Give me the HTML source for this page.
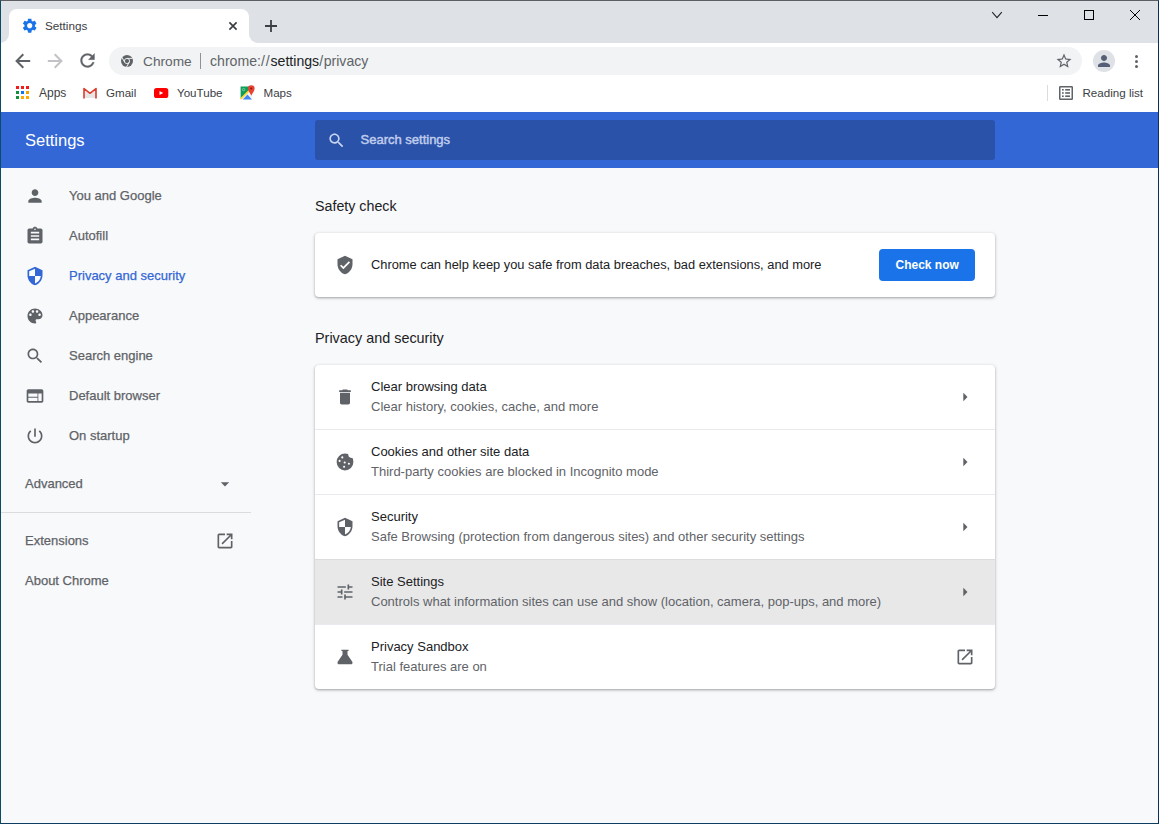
<!DOCTYPE html>
<html><head><meta charset="utf-8">
<style>
*{box-sizing:border-box;margin:0;padding:0}
html,body{width:1159px;height:824px;overflow:hidden;background:#f8f9fa;font-family:"Liberation Sans",sans-serif}
.a{position:absolute}
.t{position:absolute;white-space:nowrap;line-height:1}
svg{position:absolute;display:block}
#frame{position:absolute;left:0;top:0;width:1159px;height:824px;border:1px solid #0d4a66;border-top-color:#5c5e61;border-right-color:#0c2f5c;border-bottom-color:#0d3d60;pointer-events:none}
#tabstrip{left:0;top:0;width:1159px;height:43px;background:#dee1e6}
#toolbar{left:0;top:43px;width:1159px;height:69px;background:#fff}
#omni{left:109px;top:47px;width:973px;height:28px;border-radius:14px;background:#f1f3f4}
#header{left:0;top:112px;width:1159px;height:56px;background:#3367d6}
#search{left:315px;top:120px;width:680px;height:40px;border-radius:3px;background:#2a52a9}
.side{color:#5f6368;font-size:13px;-webkit-text-stroke:0.25px #5f6368}
.card{background:#fff;border-radius:4px;box-shadow:0 1px 2px rgba(60,64,67,.3),0 1px 3px 1px rgba(60,64,67,.15)}
.prim{color:#202124;font-size:13px}
.sec{color:#5f6368;font-size:13px}
.ic{fill:#5f6368}
</style></head><body>
<!-- tab strip -->
<div id="tabstrip" class="a"></div>
<!-- active tab -->
<div class="a" style="left:9px;top:9px;width:240px;height:34px;background:#fff;border-radius:8px 8px 0 0"></div>
<div class="a" style="left:0px;top:34px;width:9px;height:9px;background:#fff"></div>
<div class="a" style="left:0px;top:25px;width:9px;height:18px;background:#dee1e6;border-radius:0 0 9px 0"></div>
<div class="a" style="left:249px;top:34px;width:9px;height:9px;background:#fff"></div>
<div class="a" style="left:249px;top:25px;width:9px;height:18px;background:#dee1e6;border-radius:0 0 0 9px"></div>
<!-- gear -->
<svg style="left:20.6px;top:17.1px" width="17.4" height="17.4" viewBox="0 0 24 24"><path fill="#1a73e8" d="M19.14 12.94c.04-.3.06-.61.06-.94 0-.32-.02-.64-.07-.94l2.03-1.58a.49.49 0 0 0 .12-.61l-1.92-3.32a.488.488 0 0 0-.59-.22l-2.39.96c-.5-.38-1.03-.7-1.62-.94l-.36-2.54a.484.484 0 0 0-.48-.41h-3.84c-.24 0-.43.17-.47.41l-.36 2.54c-.59.24-1.13.57-1.62.94l-2.39-.96c-.22-.08-.47 0-.59.22L2.74 8.87c-.12.21-.08.47.12.61l2.03 1.58c-.05.3-.09.63-.09.94s.02.64.07.94l-2.03 1.58a.49.49 0 0 0-.12.61l1.92 3.32c.12.22.37.29.59.22l2.39-.96c.5.38 1.03.7 1.62.94l.36 2.54c.05.24.24.41.48.41h3.84c.24 0 .44-.17.47-.41l.36-2.54c.59-.24 1.13-.56 1.62-.94l2.39.96c.22.08.47 0 .59-.22l1.92-3.32c.12-.22.07-.47-.12-.61l-2.01-1.58zM12 15.6c-1.98 0-3.6-1.62-3.6-3.6s1.62-3.6 3.6-3.6 3.6 1.62 3.6 3.6-1.62 3.6-3.6 3.6z"/></svg>
<div class="t" style="left:45px;top:19.5px;font-size:11.7px;color:#3c4043">Settings</div>
<!-- tab close -->
<svg style="left:227px;top:20px" width="12" height="12" viewBox="0 0 12 12"><path d="M2.4 2.4L9.6 9.6M9.6 2.4L2.4 9.6" stroke="#3c4043" stroke-width="1.7"/></svg>
<!-- new tab plus -->
<svg style="left:264px;top:18.8px" width="14" height="14" viewBox="0 0 14 14"><path d="M7 1V13M1 7H13" stroke="#3c4043" stroke-width="1.8"/></svg>
<!-- window controls -->
<svg style="left:990px;top:9px" width="14" height="12" viewBox="0 0 14 12"><path d="M2.2 3.1L7 8.6L11.8 3.1" fill="none" stroke="#202124" stroke-width="1.05"/></svg>
<div class="a" style="left:1038px;top:15px;width:10px;height:1px;background:#000"></div>
<div class="a" style="left:1084px;top:10px;width:10px;height:10px;border:1px solid #000"></div>
<svg style="left:1129px;top:9px" width="12" height="12" viewBox="0 0 12 12"><path d="M1 1L11 11M11 1L1 11" stroke="#000" stroke-width="1"/></svg>

<!-- toolbar -->
<div id="toolbar" class="a"></div>
<svg style="left:14px;top:52px" width="18" height="18" viewBox="0 0 18 18"><path d="M2.6 9H16.2M9.3 2.3L2.6 9L9.3 15.7" fill="none" stroke="#5f6368" stroke-width="2"/></svg>
<svg style="left:46px;top:52px" width="18" height="18" viewBox="0 0 18 18"><path d="M15.4 9H1.8M8.7 2.3L15.4 9L8.7 15.7" fill="none" stroke="#c1c3c6" stroke-width="2"/></svg>
<svg style="left:76.5px;top:50.3px" width="21" height="21" viewBox="0 0 24 24"><path fill="#5f6368" stroke="#5f6368" stroke-width="0.35" d="M17.65 6.35C16.2 4.9 14.21 4 12 4c-4.42 0-7.99 3.58-7.99 8s3.57 8 7.99 8c3.73 0 6.84-2.55 7.73-6h-2.08c-.82 2.33-3.04 4-5.65 4-3.31 0-6-2.69-6-6s2.69-6 6-6c1.66 0 3.14.69 4.22 1.78L13 11h7V4l-2.35 2.35z"/></svg>
<div id="omni" class="a"></div>
<!-- chrome logo -->
<svg style="left:121px;top:55px" width="12" height="12" viewBox="0 0 24 24"><circle cx="12" cy="12" r="12" fill="#5f6368"/><circle cx="12" cy="12" r="5.2" fill="none" stroke="#f1f3f4" stroke-width="1.8"/><g stroke="#f1f3f4" stroke-width="1.8"><path d="M12 6.8H23"/><path d="M12 6.8H23" transform="rotate(120 12 12)"/><path d="M12 6.8H23" transform="rotate(240 12 12)"/></g></svg>
<div class="t" style="left:143px;top:54.8px;font-size:13.7px;color:#5f6368">Chrome</div>
<div class="a" style="left:200px;top:53px;width:1px;height:16px;background:#8e9296"></div>
<div class="t" style="left:210px;top:54.3px;font-size:14.1px;color:#5f6368">chrome:<span style="letter-spacing:0.9px">//</span><span style="color:#202124">settings</span><span style="letter-spacing:0.6px">/</span>privacy</div>
<!-- star -->
<svg style="left:1055px;top:52px" width="18" height="18" viewBox="0 0 24 24"><path fill="#5f6368" d="M22 9.24l-7.19-.62L12 2 9.19 8.63 2 9.24l5.46 4.73L5.82 21 12 17.27 18.18 21l-1.63-7.03L22 9.24zM12 15.4l-3.76 2.27 1-4.28-3.32-2.88 4.38-.38L12 6.1l1.71 4.04 4.38.38-3.32 2.88 1 4.28L12 15.4z"/></svg>
<!-- profile -->
<div class="a" style="left:1093px;top:50px;width:22px;height:22px;border-radius:11px;background:#dee1e6"></div>
<svg style="left:1095px;top:52px" width="18" height="18" viewBox="0 0 24 24"><path fill="#546076" d="M12 12c2.21 0 4-1.79 4-4s-1.79-4-4-4-4 1.79-4 4 1.79 4 4 4zm0 2c-2.67 0-8 1.34-8 4v2h16v-2c0-2.66-5.33-4-8-4z"/></svg>
<!-- menu dots -->
<div class="a" style="left:1135px;top:55px;width:3px;height:3px;border-radius:2px;background:#5f6368"></div>
<div class="a" style="left:1135px;top:60px;width:3px;height:3px;border-radius:2px;background:#5f6368"></div>
<div class="a" style="left:1135px;top:65px;width:3px;height:3px;border-radius:2px;background:#5f6368"></div>

<!-- bookmarks -->
<svg style="left:16px;top:86px" width="14" height="14" viewBox="0 0 14 14">
<rect x="0" y="0" width="3" height="3" fill="#f21c1c"/><rect x="5" y="0" width="3" height="3" fill="#f21c1c"/><rect x="10" y="0" width="3" height="3" fill="#f21c1c"/>
<rect x="0" y="5" width="3" height="3" fill="#168f3c"/><rect x="5" y="5" width="3" height="3" fill="#0f75f2"/><rect x="10" y="5" width="3" height="3" fill="#eea200"/>
<rect x="0" y="10" width="3" height="3" fill="#168f3c"/><rect x="5" y="10" width="3" height="3" fill="#fbab00"/><rect x="10" y="10" width="3" height="3" fill="#fbab00"/></svg>
<div class="t" style="left:39px;top:87px;font-size:12px;color:#3c4043">Apps</div>
<svg style="left:82px;top:87px" width="16" height="12" viewBox="0 0 16 12"><path d="M2 3.5L8 7.5L14 3.5V11H2z" fill="#e6e6e6"/><path d="M2 11V1.6L8 6.3L14 1.6V11" fill="none" stroke="#dd3b2c" stroke-width="1.6" stroke-linejoin="round" stroke-linecap="round"/></svg>
<div class="t" style="left:106px;top:87.2px;font-size:11.6px;color:#3c4043">Gmail</div>
<svg style="left:153.8px;top:87.8px" width="15" height="11" viewBox="0 0 15 11"><rect x="0" y="0" width="14.3" height="10" rx="2.6" fill="#f00"/><path d="M5.5 3.1V7L9.2 5.05z" fill="#fff"/></svg>
<div class="t" style="left:177px;top:87.2px;font-size:11.6px;color:#3c4043">YouTube</div>
<svg style="left:236px;top:82px" width="24" height="20" viewBox="0 0 24 20"><path d="M4.6 4.6H13V8.5L4.6 16.8z" fill="#0f9d58"/><path d="M4.6 17.5L13.5 8.6L16.2 11.3V17.5z" fill="#f4f4f4"/><path d="M6.8 17.5L11.5 12.4L15.9 17.5z" fill="#4285f4"/><path d="M4.6 17.2L13.3 8.5" stroke="#fdd835" stroke-width="1.7"/><circle cx="7.6" cy="7.6" r="1.2" fill="none" stroke="#8fd3a8" stroke-width="0.8"/><path d="M15.3 13.8C14.5 11.5 12 9.5 12 6.6A3.3 3.3 0 0 1 18.6 6.6C18.6 9.5 16.1 11.5 15.3 13.8z" fill="#e94235"/><circle cx="15.3" cy="6.5" r="1.1" fill="#8a1c12"/></svg>
<div class="t" style="left:263.5px;top:87.2px;font-size:11.6px;color:#3c4043">Maps</div>
<div class="a" style="left:1047px;top:85px;width:1px;height:16px;background:#dadce0"></div>
<svg style="left:1059px;top:86px" width="14" height="14" viewBox="0 0 14 14"><rect x="0.75" y="0.75" width="12.5" height="12.5" rx="0.6" fill="none" stroke="#5f6368" stroke-width="1.5"/><rect x="3" y="3" width="1.7" height="1.6" fill="#5f6368"/><rect x="6.2" y="3" width="4.8" height="1.6" fill="#5f6368"/><rect x="3" y="6.2" width="1.7" height="1.6" fill="#5f6368"/><rect x="6.2" y="6.2" width="4.8" height="1.6" fill="#5f6368"/><rect x="3" y="9.4" width="1.7" height="1.6" fill="#5f6368"/><rect x="6.2" y="9.4" width="4.8" height="1.6" fill="#5f6368"/></svg>
<div class="t" style="left:1082.5px;top:87.2px;font-size:11.6px;color:#3c4043">Reading list</div>

<!-- settings header -->
<div id="header" class="a"></div>
<div class="t" style="left:25px;top:132px;font-size:16.5px;color:#fff">Settings</div>
<div id="search" class="a"></div>
<svg style="left:327px;top:130.5px" width="19" height="19" viewBox="0 0 24 24"><path fill="#c8d5f3" d="M15.5 14h-.79l-.28-.27C15.41 12.59 16 11.11 16 9.5 16 5.91 13.09 3 9.5 3S3 5.91 3 9.5 5.91 16 9.5 16c1.61 0 3.09-.59 4.23-1.57l.27.28v.79l5 4.99L20.49 19l-4.99-5zm-6 0C7.01 14 5 11.99 5 9.5S7.01 5 9.5 5 14 7.01 14 9.5 11.99 14 9.5 14z"/></svg>
<div class="t" style="left:360.5px;top:133px;font-size:13px;color:#c0cdec;-webkit-text-stroke:0.45px #c0cdec">Search settings</div>

<!-- sidebar -->
<svg class="ic" style="left:25px;top:186px" width="20" height="20" viewBox="0 0 24 24"><path d="M12 12c2.21 0 4-1.79 4-4s-1.79-4-4-4-4 1.79-4 4 1.79 4 4 4zm0 2c-2.67 0-8 1.34-8 4v2h16v-2c0-2.66-5.33-4-8-4z"/></svg>
<div class="t side" style="left:69px;top:189px">You and Google</div>
<svg class="ic" style="left:25px;top:226px" width="20" height="20" viewBox="0 0 24 24"><path d="M19 3h-4.18C14.4 1.84 13.3 1 12 1c-1.3 0-2.4.84-2.82 2H5c-1.1 0-2 .9-2 2v14c0 1.1.9 2 2 2h14c1.1 0 2-.9 2-2V5c0-1.1-.9-2-2-2zm-7 0c.55 0 1 .45 1 1s-.45 1-1 1-1-.45-1-1 .45-1 1-1zm5 14H7v-2h10v2zm0-4H7v-2h10v2zm0-4H7V7h10v2z"/></svg>
<div class="t side" style="left:69px;top:229px">Autofill</div>
<svg style="left:25px;top:266px" width="20" height="20" viewBox="0 0 24 24"><path fill="#3367d6" d="M12 1L3 5v6c0 5.55 3.84 10.74 9 12 5.16-1.26 9-6.45 9-12V5l-9-4zm0 10.99h7c-.53 4.12-3.28 7.79-7 8.94V12H5V6.3l7-3.11v8.8z"/></svg>
<div class="t side" style="left:69px;top:269px;color:#3367d6;-webkit-text-stroke-color:#3367d6">Privacy and security</div>
<svg class="ic" style="left:25px;top:306px" width="20" height="20" viewBox="0 0 24 24"><path d="M12 3c-4.97 0-9 4.03-9 9s4.03 9 9 9c.83 0 1.5-.67 1.5-1.5 0-.39-.15-.74-.39-1.01-.23-.26-.38-.61-.38-.99 0-.83.67-1.5 1.5-1.5H16c2.76 0 5-2.24 5-5 0-4.42-4.03-8-9-8zm-5.5 9c-.83 0-1.5-.67-1.5-1.5S5.67 9 6.5 9 8 9.670 8 10.5 7.330 12 6.5 12zm3-4C8.67 8 8 7.33 8 6.5S8.67 5 9.5 5s1.5.67 1.5 1.5S10.33 8 9.5 8zm5 0c-.83 0-1.5-.67-1.5-1.5S13.67 5 14.5 5s1.5.67 1.5 1.5S15.33 8 14.5 8zm3 4c-.83 0-1.5-.67-1.5-1.5S16.67 9 17.5 9s1.5.67 1.5 1.5-.67 1.5-1.5 1.5z"/></svg>
<div class="t side" style="left:69px;top:309px">Appearance</div>
<svg class="ic" style="left:25px;top:346px" width="20" height="20" viewBox="0 0 24 24"><path d="M15.5 14h-.79l-.28-.27C15.41 12.59 16 11.11 16 9.5 16 5.910 13.09 3 9.5 3S3 5.91 3 9.5 5.91 16 9.5 16c1.61 0 3.090-.59 4.23-1.57l.27.28v.79l5 4.99L20.49 19l-4.99-5zm-6 0C7.01 14 5 11.99 5 9.5S7.01 5 9.5 5 14 7.01 14 9.5 11.99 14 9.5 14z"/></svg>
<div class="t side" style="left:69px;top:349px">Search engine</div>
<svg class="ic" style="left:25px;top:386px" width="20" height="20" viewBox="0 0 24 24"><path d="M20 4H4c-1.1 0-1.99.9-1.99 2L2 18c0 1.1.9 2 2 2h16c1.1 0 2-.9 2-2V6c0-1.1-.9-2-2-2zm-5 14H4v-4h11v4zm0-5H4V9h11v4zm5 5h-4V9h4v9z"/></svg>
<div class="t side" style="left:69px;top:389px">Default browser</div>
<svg class="ic" style="left:25px;top:426px" width="20" height="20" viewBox="0 0 24 24"><path d="M13 3h-2v10h2V3zm4.83 2.17l-1.42 1.42C17.99 7.86 19 9.81 19 12c0 3.87-3.13 7-7 7s-7-3.13-7-7c0-2.19 1.01-4.14 2.58-5.42L6.17 5.17C4.23 6.82 3 9.26 3 12c0 4.97 4.03 9 9 9s9-4.03 9-9c0-2.74-1.23-5.18-3.17-6.83z"/></svg>
<div class="t side" style="left:69px;top:429px">On startup</div>
<div class="t side" style="left:25px;top:477px">Advanced</div>
<svg class="ic" style="left:215px;top:474px" width="20" height="20" viewBox="0 0 24 24"><path d="M7 10l5 5 5-5z"/></svg>
<div class="a" style="left:1px;top:512px;width:250px;height:1px;background:#dadce0"></div>
<div class="t side" style="left:25px;top:534px">Extensions</div>
<svg class="ic" style="left:215px;top:531px" width="20" height="20" viewBox="0 0 24 24"><path d="M19 19H5V5h7V3H5c-1.11 0-2 .9-2 2v14c0 1.1.89 2 2 2h14c1.1 0 2-.9 2-2v-7h-2v7zM14 3v2h3.59l-9.83 9.830 1.41 1.41L19 6.41V10h2V3h-7z"/></svg>
<div class="t side" style="left:25px;top:574px">About Chrome</div>

<!-- main -->
<div class="t" style="left:315px;top:199px;font-size:14.25px;color:#202124">Safety check</div>
<div class="a card" style="left:315px;top:233px;width:680px;height:64px"></div>
<svg class="ic" style="left:335px;top:255px" width="20" height="20" viewBox="0 0 24 24"><path d="M12 1L3 5v6c0 5.55 3.840 10.74 9 12 5.16-1.26 9-6.45 9-12V5l-9-4zm-2 16l-4-4 1.41-1.41L10 14.17l6.59-6.59L18 9l-8 8z"/></svg>
<div class="t prim" style="left:371px;top:259px;font-size:12.85px">Chrome can help keep you safe from data breaches, bad extensions, and more</div>
<div class="a" style="left:879px;top:249px;width:96px;height:32px;border-radius:4px;background:#1a73e8"></div>
<div class="t" style="left:895.5px;top:258.5px;font-size:12px;font-weight:700;color:#fff">Check now</div>

<div class="t" style="left:315px;top:331px;font-size:14.4px;color:#202124">Privacy and security</div>
<div class="a card" style="left:315px;top:365px;width:680px;height:324px;overflow:hidden">
</div>
<div class="a" style="left:315px;top:429px;width:680px;height:1px;background:#e8eaed"></div>
<div class="a" style="left:315px;top:494px;width:680px;height:1px;background:#e8eaed"></div>
<div class="a" style="left:315px;top:559px;width:680px;height:65px;background:#e8e8e8"></div>
<div class="a" style="left:315px;top:559px;width:680px;height:1px;background:#dcdcdd"></div>
<div class="a" style="left:315px;top:624px;width:680px;height:1px;background:#e8eaed"></div>

<svg class="ic" style="left:335px;top:387px" width="20" height="20" viewBox="0 0 24 24"><path d="M6 19c0 1.1.9 2 2 2h8c1.1 0 2-.9 2-2V7H6v12zM19 4h-3.5l-1-1h-5l-1 1H5v2h14V4z"/></svg>
<div class="t prim" style="left:371px;top:380px">Clear browsing data</div>
<div class="t sec" style="left:371px;top:400px">Clear history, cookies, cache, and more</div>
<svg class="ic" style="left:955px;top:387px" width="20" height="20" viewBox="0 0 24 24"><path d="M10 17l5-5-5-5v10z"/></svg>

<svg style="left:335px;top:452px" width="20" height="20" viewBox="0 0 20 20"><circle cx="10" cy="10" r="8.4" fill="#5f6368"/><circle cx="16.6" cy="2.6" r="3.3" fill="#fff"/><g fill="#fff"><circle cx="7.3" cy="5.4" r="1.05"/><circle cx="4.6" cy="8.9" r="1.05"/><circle cx="9.7" cy="10.5" r="1.05"/><circle cx="13.9" cy="11.8" r="1.05"/><circle cx="9.1" cy="14.8" r="1.05"/></g></svg>
<div class="t prim" style="left:371px;top:445px">Cookies and other site data</div>
<div class="t sec" style="left:371px;top:465px">Third-party cookies are blocked in Incognito mode</div>
<svg class="ic" style="left:955px;top:452px" width="20" height="20" viewBox="0 0 24 24"><path d="M10 17l5-5-5-5v10z"/></svg>

<svg class="ic" style="left:335px;top:517px" width="20" height="20" viewBox="0 0 24 24"><path d="M12 1L3 5v6c0 5.55 3.84 10.74 9 12 5.16-1.26 9-6.45 9-12V5l-9-4zm0 10.99h7c-.53 4.12-3.28 7.79-7 8.94V12H5V6.3l7-3.11v8.8z"/></svg>
<div class="t prim" style="left:371px;top:510px">Security</div>
<div class="t sec" style="left:371px;top:530px">Safe Browsing (protection from dangerous sites) and other security settings</div>
<svg class="ic" style="left:955px;top:517px" width="20" height="20" viewBox="0 0 24 24"><path d="M10 17l5-5-5-5v10z"/></svg>

<svg class="ic" style="left:335px;top:582px" width="20" height="20" viewBox="0 0 24 24"><path d="M3 17v2h6v-2H3zM3 5v2h10V5H3zm10 16v-2h8v-2h-8v-2h-2v6h2zM7 9v2H3v2h4v2h2V9H7zm14 4v-2H11v2h10zm-6-4h2V7h4V5h-4V3h-2v6z"/></svg>
<div class="t prim" style="left:371px;top:575px">Site Settings</div>
<div class="t sec" style="left:371px;top:595px">Controls what information sites can use and show (location, camera, pop-ups, and more)</div>
<svg class="ic" style="left:955px;top:582px" width="20" height="20" viewBox="0 0 24 24"><path d="M10 17l5-5-5-5v10z"/></svg>

<svg class="ic" style="left:335px;top:647px" width="20" height="20" viewBox="0 0 20 20"><path d="M6.4 2.7H13.6V4H12.5V7.8L17.3 14.8C17.8 15.6 17.5 17.3 16.4 17.3H3.6C2.5 17.3 2.2 15.6 2.7 14.8L7.5 7.8V4H6.4z"/></svg>
<div class="t prim" style="left:371px;top:640px">Privacy Sandbox</div>
<div class="t sec" style="left:371px;top:660px">Trial features are on</div>
<svg class="ic" style="left:955px;top:647px" width="20" height="20" viewBox="0 0 24 24"><path d="M19 19H5V5h7V3H5c-1.11 0-2 .9-2 2v14c0 1.1.89 2 2 2h14c1.1 0 2-.9 2-2v-7h-2v7zM14 3v2h3.59l-9.83 9.83 1.41 1.41L19 6.41V10h2V3h-7z"/></svg>

<div id="frame"></div>
</body></html>
